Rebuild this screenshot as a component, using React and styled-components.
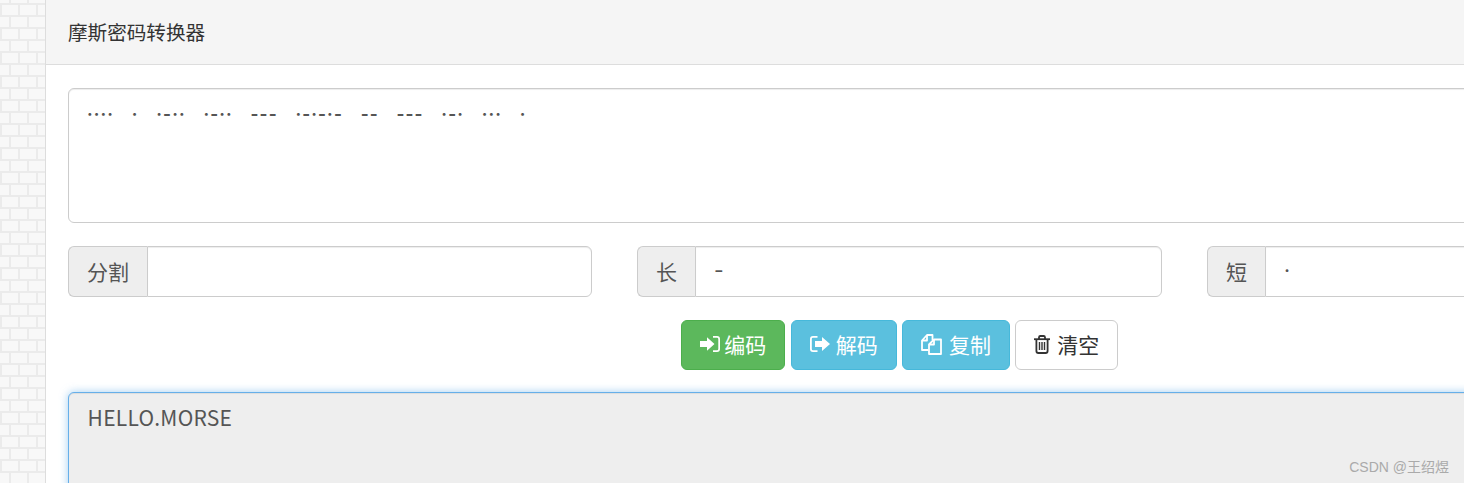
import React from "react";
import styled, { createGlobalStyle } from "styled-components";

const GlobalStyle = createGlobalStyle`
  html, body {
    margin: 0;
    padding: 0;
    height: 100%;
    overflow: hidden;
  }
  body {
    font-family: "Noto Sans CJK SC", "Open Sans", sans-serif;
    color: #555;
    background-color: #f8f8f8;
    background-image:
      linear-gradient(#ebebeb 2px, transparent 2px),
      conic-gradient(at 2px 12px, transparent 75%, #ebebeb 0),
      conic-gradient(at 2px 12px, transparent 75%, #ebebeb 0);
    background-size: 18px 12px, 18px 24px, 18px 24px;
    background-position: 0 3px, 0 4px, 9px 16px;
  }
`;

const Page = styled.div`
  padding-left: 45px;
  width: 1708px;
  height: 483px;
  overflow: hidden;
`;

const Panel = styled.section`
  background: #fff;
  border-left: 1px solid #ddd;
  height: 100%;
`;

const PanelHeading = styled.header`
  height: 65px;
  box-sizing: border-box;
  padding: 0 0 2px 22px;
  display: flex;
  align-items: center;
  background: #f5f5f5;
  border-bottom: 1px solid #ddd;
  color: #333;
  font-size: 19.6px;
`;

const PanelBody = styled.div`
  padding: 23px 22px 0;
  display: flex;
  flex-direction: column;
`;

const TextBox = styled.textarea`
  display: block;
  box-sizing: border-box;
  width: 100%;
  height: ${(p) => p.$height}px;
  padding: 10px 18.6px;
  margin: 0;
  resize: none;
  outline: none;
  font-family: inherit;
  font-size: 21px;
  letter-spacing: 0.25px;
  line-height: 1.4;
  color: #555;
  border-radius: 6px;
  border: 1px solid ${(p) => (p.$active ? "#66afe9" : "#ccc")};
  background: ${(p) => (p.$active ? "#eee" : "#fff")};
  box-shadow: ${(p) =>
    p.$active
      ? "inset 0 1px 1px rgba(0,0,0,.075), 0 0 8px rgba(102,175,233,.6)"
      : "inset 0 1px 1px rgba(0,0,0,.075)"};
`;

const MorseBox = styled(TextBox)`
  font-family: "Inter", sans-serif;
  font-weight: 700;
  font-size: 17px;
  letter-spacing: 1.1px;
  line-height: 26px;
  word-spacing: 12.6px;
  padding: 12px 18px;
`;

const FieldGrid = styled.div`
  display: grid;
  grid-template-columns: 524px 525px 1fr;
  column-gap: 45px;
  margin-top: 23px;
`;

const InputGroup = styled.div`
  display: flex;
  height: 51px;
  font-size: 21px;
`;

const Addon = styled.span`
  display: flex;
  align-items: center;
  padding: 0 18px 2px;
  background: #eee;
  border: 1px solid #ccc;
  border-right: 0;
  border-radius: 6px 0 0 6px;
`;

const Field = styled.input`
  flex: 1;
  min-width: 0;
  box-sizing: border-box;
  margin: 0;
  padding: 0 18px 2px;
  outline: none;
  font-family: "Inter", sans-serif;
  font-size: 21px;
  color: #555;
  border: 1px solid #ccc;
  border-radius: 0 6px 6px 0;
  box-shadow: inset 0 1px 1px rgba(0, 0, 0, 0.075);
`;

const ButtonRow = styled.div`
  display: flex;
  justify-content: center;
  gap: 5.33px;
  margin: 23px 0 22px;
`;

const colors = {
  success: ["#5cb85c", "#4cae4c", "#fff"],
  info: ["#5bc0de", "#46b8da", "#fff"],
  plain: ["#fff", "#ccc", "#333"],
};

const Button = styled.button`
  display: flex;
  align-items: center;
  gap: ${(p) => p.$gap}px;
  height: 50px;
  box-sizing: border-box;
  padding: 0 18px 2px;
  font-family: inherit;
  font-size: 21px;
  border-radius: 6px;
  border: 1px solid ${(p) => colors[p.$kind][1]};
  background: ${(p) => colors[p.$kind][0]};
  color: ${(p) => colors[p.$kind][2]};
`;

const Watermark = styled.div`
  position: absolute;
  right: 15px;
  top: 458px;
  font-family: "Liberation Sans", "Noto Sans CJK SC", sans-serif;
  font-size: 14px;
  line-height: 18px;
  color: #aaa;
`;

const SignIn = () => (
  <svg width="20" height="16" viewBox="0 0 20 16" fill="currentColor">
    <path d="M0 5h7V1.2L14.5 8 7 14.8V11H0z" />
    <path d="M13 0h4a3 3 0 0 1 3 3v10a3 3 0 0 1-3 3h-4v-1.7h4a1.3 1.3 0 0 0 1.3-1.3V3A1.3 1.3 0 0 0 17 1.7h-4z" />
  </svg>
);

const SignOut = () => (
  <svg width="20" height="16" viewBox="0 0 20 16" fill="currentColor">
    <path d="M7.5 0H3a3 3 0 0 0-3 3v10a3 3 0 0 0 3 3h4.5v-1.8H3A1.2 1.2 0 0 1 1.8 13V3A1.2 1.2 0 0 1 3 1.8h4.5z" />
    <path d="M5 5h7V1L20 8l-8 7v-4H5z" />
  </svg>
);

const Files = () => (
  <svg width="21" height="21" viewBox="0 0 21 21" fill="none" stroke="currentColor" strokeWidth="1.8" strokeLinejoin="round">
    <path d="M7.5 16H1V6.5L6 1h5.5v5" />
    <path d="M6 1.2V6.5H1.2" />
    <path d="M20 20H8V10.5L13 5.5h7z" />
    <path d="M13 5.7V10.5H8.2" />
  </svg>
);

const Trash = () => (
  <svg width="16" height="19" viewBox="0 0 16 19" fill="none" stroke="currentColor" strokeWidth="1.8">
    <path d="M0 4.2h16" />
    <path d="M5 4V2.2A1.3 1.3 0 0 1 6.3 1h3.4A1.3 1.3 0 0 1 11 2.2V4" />
    <path d="M2.4 4.2V16a2 2 0 0 0 2 2h7.2a2 2 0 0 0 2-2V4.2" />
    <path d="M5.5 7v8M8 7v8M10.5 7v8" strokeWidth="1.4" />
  </svg>
);

export default function App() {
  return (
    <Page>
      <GlobalStyle />
      <Panel>
        <PanelHeading>摩斯密码转换器</PanelHeading>
        <PanelBody>
          <MorseBox
            $height={135}
            readOnly
            value="···· · ·-·· ·-·· --- ·-·-·- -- --- ·-· ··· ·"
          />
          <FieldGrid>
            <InputGroup>
              <Addon>分割</Addon>
              <Field readOnly value="" />
            </InputGroup>
            <InputGroup>
              <Addon>长</Addon>
              <Field readOnly value="-" />
            </InputGroup>
            <InputGroup>
              <Addon>短</Addon>
              <Field readOnly value="·" />
            </InputGroup>
          </FieldGrid>
          <ButtonRow>
            <Button $kind="success" $gap={4.7}>
              <SignIn />
              编码
            </Button>
            <Button $kind="info" $gap={6}>
              <SignOut />
              解码
            </Button>
            <Button $kind="info" $gap={7}>
              <Files />
              复制
            </Button>
            <Button $kind="plain" $gap={7}>
              <Trash />
              清空
            </Button>
          </ButtonRow>
          <TextBox $height={200} $active readOnly value="HELLO.MORSE" />
        </PanelBody>
      </Panel>
      <Watermark>CSDN @王绍煜</Watermark>
    </Page>
  );
}
